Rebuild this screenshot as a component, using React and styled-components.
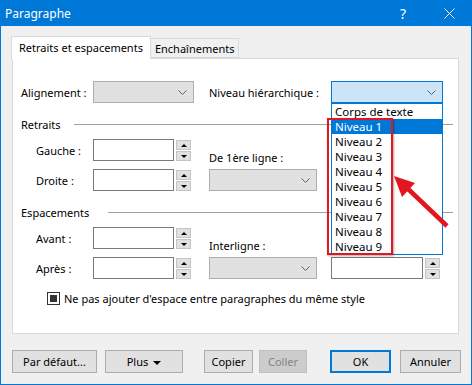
import React from "react";
import styled, { createGlobalStyle } from "styled-components";

const GlobalStyle = createGlobalStyle`
  html, body { margin: 0; padding: 0; background: #ffffff; }
  body {
    font-family: "Noto Sans", "Open Sans", sans-serif;
    font-size: 11px;
    color: #000;
  }
  * { box-sizing: border-box; }
`;

const Window = styled.div`
  position: relative;
  width: 472px;
  height: 385px;
  border: 1px solid #0078d7;
  border-top: none;
  background: #f0f0f0;
  display: flex;
  flex-direction: column;
`;

const TitleBar = styled.div`
  height: 26px;
  margin: 0 -1px;
  background: #0078d7;
  color: #fff;
  display: flex;
  align-items: center;
  padding-left: 5px;
`;

const Title = styled.div`
  flex: 1;
  font-size: 12px;
`;

const CaptionButton = styled.div`
  width: 46px;
  height: 26px;
  display: flex;
  align-items: center;
  justify-content: center;
  font-size: 14px;
`;

const Body = styled.div`
  flex: 1;
  padding: 10px 10px 0 10px;
  display: flex;
  flex-direction: column;
`;

const TabRow = styled.div`
  display: flex;
  align-items: flex-end;
  height: 22px;
  position: relative;
  z-index: 1;
`;

const Tab = styled.div`
  height: ${(p) => (p.$active ? "23px" : "20px")};
  margin-bottom: ${(p) => (p.$active ? "-1px" : "0")};
  padding: ${(p) => (p.$active ? "3px 7px 0 7px" : "2px 4px 0 4px")};
  background: ${(p) => (p.$active ? "#fff" : "#f0f0f0")};
  border: 1px solid #d9d9d9;
  border-bottom: ${(p) => (p.$active ? "none" : "1px solid #d9d9d9")};
  border-left: ${(p) => (p.$active ? "1px solid #d9d9d9" : "none")};
  white-space: nowrap;
  line-height: 15px;
`;

const Panel = styled.div`
  width: 447px;
  height: 276px;
  background: #fff;
  border: 1px solid #d9d9d9;
  margin-left: 1px;
  padding: 22px 0 0 8px;
  display: flex;
  flex-direction: column;
`;

const Row = styled.div`
  display: flex;
  align-items: center;
  height: 22px;
`;

const Label = styled.div`
  width: ${(p) => p.$w}px;
  margin-left: ${(p) => p.$ml || 0}px;
  flex: none;
  line-height: 15px;
  white-space: nowrap;
`;

const SelectBox = styled.div`
  position: relative;
  width: ${(p) => p.$w}px;
  height: 22px;
  flex: none;
  background: ${(p) => (p.$active ? "#cce4f7" : "#e1e1e1")};
  border: 1px solid ${(p) => (p.$active ? "#0078d7" : "#adadad")};
  display: flex;
  align-items: center;
  justify-content: flex-end;
  padding-right: 6px;
`;

const SectionHeader = styled.div`
  display: flex;
  align-items: center;
  height: 15px;
  margin-top: 14px;
  padding-right: 5px;
  line-height: 15px;
`;

const SectionTitle = styled.div`
  width: ${(p) => p.$w}px;
  flex: none;
  white-space: nowrap;
`;

const SectionRule = styled.div`
  flex: 1;
  border-top: 1px solid #a0a0a0;
  margin-top: -1px;
`;

const Section = styled.div`
  display: flex;
  margin-top: 7px;
`;

const FieldColumn = styled.div`
  display: flex;
  flex-direction: column;
  gap: 8px;
  padding-left: 15px;
`;

const SideColumn = styled.div`
  display: flex;
  flex-direction: column;
  justify-content: flex-end;
  gap: 4px;
  margin-left: ${(p) => p.$ml}px;
`;

const Input = styled.div`
  width: ${(p) => p.$w}px;
  height: 22px;
  flex: none;
  background: #fff;
  border: 1px solid #7a7a7a;
`;

const Spin = styled.div`
  display: flex;
  flex-direction: column;
  gap: 1px;
  margin-left: 2px;
  height: 21px;
  margin-top: 1px;
  align-self: flex-start;
`;

const SpinButton = styled.div`
  width: 15px;
  height: 10px;
  background: #e1e1e1;
  border: 1px solid #c4c4c4;
  display: flex;
  align-items: center;
  justify-content: center;
`;

const Arrow = styled.div`
  width: 0;
  height: 0;
  border-left: 3px solid transparent;
  border-right: 3px solid transparent;
  ${(p) =>
    p.$up ? "border-bottom: 3px solid #000;" : "border-top: 3px solid #000;"}
`;

const CheckRow = styled.div`
  display: flex;
  align-items: center;
  gap: 4px;
  margin-top: 12px;
  padding-left: 26px;
  line-height: 15px;
`;

const CheckBox = styled.div`
  width: 13px;
  height: 13px;
  border: 1px solid #333;
  background: #fff;
  display: flex;
  align-items: center;
  justify-content: center;
  &::after {
    content: "";
    width: 7px;
    height: 7px;
    background: #333;
  }
`;

const DropList = styled.div`
  position: absolute;
  top: 21px;
  left: -1px;
  width: 112px;
  background: #fff;
  border: 1px solid #0078d7;
  z-index: 2;
`;

const DropItem = styled.div`
  height: 15px;
  line-height: 15px;
  padding-left: 3px;
  overflow: hidden;
  white-space: nowrap;
  font-size: 11.5px;
  background: ${(p) => (p.$selected ? "#0078d7" : "transparent")};
  color: ${(p) => (p.$selected ? "#fff" : "#000")};
`;

const ButtonRow = styled.div`
  display: flex;
  margin-top: 16px;
  padding-left: 1px;
`;

const Button = styled.div`
  width: ${(p) => p.$w}px;
  height: 23px;
  margin-left: ${(p) => p.$ml || 0}px;
  background: ${(p) => (p.$disabled ? "#cccccc" : "#e1e1e1")};
  color: ${(p) => (p.$disabled ? "#838383" : "#000")};
  border: ${(p) =>
    p.$default ? "2px solid #0078d7" : p.$disabled ? "1px solid #bfbfbf" : "1px solid #adadad"};
  display: flex;
  align-items: center;
  justify-content: center;
  gap: 5px;
  white-space: nowrap;
`;

const MenuCaret = styled.span`
  width: 0;
  height: 0;
  border-left: 4px solid transparent;
  border-right: 4px solid transparent;
  border-top: 4px solid #000;
  margin-top: 2px;
`;

const Highlight = styled.div`
  position: absolute;
  left: 326px;
  top: 118px;
  width: 66px;
  height: 137px;
  border: 2px solid #e3161f;
  box-shadow: 1px 1px 2px rgba(0, 0, 0, 0.35);
  z-index: 3;
  pointer-events: none;
`;

const Overlay = styled.svg`
  position: absolute;
  left: 0;
  top: 0;
  z-index: 4;
  pointer-events: none;
`;

const Chevron = () => (
  <svg width="9" height="5" viewBox="0 0 9 5">
    <path d="M0.5 0.5 L4.5 4.5 L8.5 0.5" fill="none" stroke="#606060" strokeWidth="1" />
  </svg>
);

const SpinControl = () => (
  <Spin>
    <SpinButton>
      <Arrow $up />
    </SpinButton>
    <SpinButton>
      <Arrow />
    </SpinButton>
  </Spin>
);

const Field = ({ label }) => (
  <Row>
    <Label $w={57}>{label}</Label>
    <Input $w={81} />
    <SpinControl />
  </Row>
);

const levels = [
  "Corps de texte",
  "Niveau 1",
  "Niveau 2",
  "Niveau 3",
  "Niveau 4",
  "Niveau 5",
  "Niveau 6",
  "Niveau 7",
  "Niveau 8",
  "Niveau 9",
];

export default function App() {
  return (
    <>
      <GlobalStyle />
      <Window>
        <TitleBar>
          <Title>Paragraphe</Title>
          <CaptionButton>?</CaptionButton>
          <CaptionButton>
            <svg width="11" height="11" viewBox="0 0 11 11">
              <path d="M0.5 0.5 L10.5 10.5 M10.5 0.5 L0.5 10.5" stroke="#fff" strokeWidth="1" />
            </svg>
          </CaptionButton>
        </TitleBar>
        <Body>
          <TabRow>
            <Tab $active>Retraits et espacements</Tab>
            <Tab>Enchaînements</Tab>
          </TabRow>
          <Panel>
            <Row>
              <Label $w={72}>Alignement :</Label>
              <SelectBox $w={101}>
                <Chevron />
              </SelectBox>
              <Label $w={122} $ml={15}>
                Niveau hiérarchique :
              </Label>
              <SelectBox $w={112} $active>
                <Chevron />
                <DropList>
                  {levels.map((l) => (
                    <DropItem key={l} $selected={l === "Niveau 1"}>
                      {l}
                    </DropItem>
                  ))}
                </DropList>
              </SelectBox>
            </Row>

            <SectionHeader>
              <SectionTitle $w={53}>Retraits</SectionTitle>
              <SectionRule />
            </SectionHeader>
            <Section>
              <FieldColumn>
                <Field label="Gauche :" />
                <Field label="Droite :" />
              </FieldColumn>
              <SideColumn $ml={18}>
                <Label $w={108}>De 1ère ligne :</Label>
                <SelectBox $w={108}>
                  <Chevron />
                </SelectBox>
              </SideColumn>
            </Section>

            <SectionHeader>
              <SectionTitle $w={87}>Espacements</SectionTitle>
              <SectionRule />
            </SectionHeader>
            <Section>
              <FieldColumn>
                <Field label="Avant :" />
                <Field label="Après :" />
              </FieldColumn>
              <SideColumn $ml={18}>
                <Label $w={108}>Interligne :</Label>
                <SelectBox $w={108}>
                  <Chevron />
                </SelectBox>
              </SideColumn>
              <SideColumn $ml={14}>
                <Row>
                  <Input $w={92} />
                  <SpinControl />
                </Row>
              </SideColumn>
            </Section>

            <CheckRow>
              <CheckBox />
              Ne pas ajouter d'espace entre paragraphes du même style
            </CheckRow>
          </Panel>

          <ButtonRow>
            <Button $w={85}>Par défaut...</Button>
            <Button $w={78} $ml={8}>
              Plus <MenuCaret />
            </Button>
            <Button $w={49} $ml={21}>Copier</Button>
            <Button $w={48} $ml={6} $disabled>Coller</Button>
            <Button $w={61} $ml={23} $default>OK</Button>
            <Button $w={61} $ml={9}>Annuler</Button>
          </ButtonRow>
        </Body>

        <Highlight />
        <Overlay width="472" height="385" viewBox="0 0 472 385">
          <line x1="446" y1="226" x2="405" y2="187" stroke="#e3161f" strokeWidth="4.5" />
          <polygon points="393,176 414,183 401,197" fill="#e3161f" />
        </Overlay>
      </Window>
    </>
  );
}
